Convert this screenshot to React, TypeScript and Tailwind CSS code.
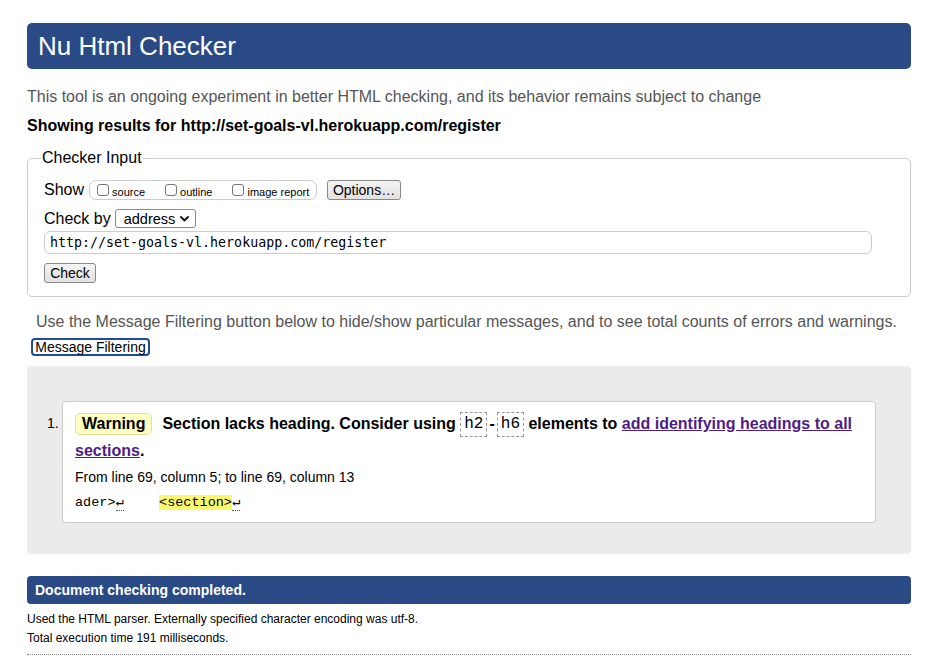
import React from 'react';

const sans = "font-['Liberation_Sans',Arial,sans-serif]";
const mono = "font-['Liberation_Mono','Courier_New',monospace]";

function Box({ label }: { label: string }) {
  return (
    <label className="flex shrink-0 items-center gap-[3px] whitespace-nowrap">
      <span className="inline-block h-[12px] w-[12px] rounded-[3px] border border-[#777] bg-white" />
      <span className="mt-[3px] text-[11px] leading-[14px]">{label}</span>
    </label>
  );
}

function Code({ children }: { children: React.ReactNode }) {
  return (
    <code
      className={`${mono} inline-block border border-dashed border-[#999] px-[3px] align-middle text-[16px] font-normal leading-[23px]`}
    >
      {children}
    </code>
  );
}

export default function App() {
  return (
    <div className={`${sans} min-h-[661px] bg-white text-black`}>
      <div className="ml-[27px] w-[884px] pt-[23px]">
        <h1 className="flex h-[46px] items-center rounded-[5px] bg-[#2a4a86] px-[11px] text-[26px] font-normal text-white">
          Nu Html Checker
        </h1>

        <p className="mt-[18px] text-[16px] leading-[20px] text-[#555]">
          This tool is an ongoing experiment in better HTML checking, and its behavior remains subject to change
        </p>
        <p className="mt-[9px] text-[16px] font-bold leading-[20px]">
          Showing results for http://set-goals-vl.herokuapp.com/register
        </p>

        <fieldset className="mt-[12px] rounded-[5px] border border-[#ccc] px-[16px] pb-[13px]">
          <legend className="-ml-[3px] px-[1px] text-[16px] leading-[20px]">Checker Input</legend>

          <div className="mt-[12px] flex h-[20px] items-center">
            <span className="text-[16px] leading-[20px]">Show</span>
            <div className="ml-[5px] flex h-[20px] w-[228px] items-center gap-[20px] rounded-[7px] border border-[#ccc] pl-[7px]">
              <Box label="source" />
              <Box label="outline" />
              <Box label="image report" />
            </div>
            <button className="ml-[10px] h-[20px] w-[74px] rounded-[3px] border border-[#888] bg-gradient-to-b from-[#f4f4f4] to-[#e2e2e2] text-[14px] leading-[18px]">
              Options…
            </button>
          </div>

          <div className="mt-[9px] flex h-[19px] items-center">
            <span className="text-[16px] leading-[20px]">Check by</span>
            <div className="ml-[4px] flex h-[19px] w-[81px] items-center justify-between rounded-[3px] border border-[#888] bg-white pl-[8px] pr-[6px]">
              <span className="text-[14.5px] leading-[16px]">address</span>
              <svg width="9" height="6" viewBox="0 0 9 6" fill="none">
                <path d="M1 1l3.5 3.5L8 1" stroke="#111" strokeWidth="1.8" strokeLinecap="round" strokeLinejoin="round" />
              </svg>
            </div>
          </div>

          <div className="mt-[3px] flex h-[23px] w-[828px] items-center rounded-[6px] border border-[#ccc] bg-white px-[5px]">
            <span className="font-['DejaVu_Sans_Mono',monospace] text-[13.3px] leading-[16px]">
              http://set-goals-vl.herokuapp.com/register
            </span>
          </div>

          <button className="mt-[9px] block h-[20px] w-[52px] rounded-[3px] border border-[#888] bg-gradient-to-b from-[#f4f4f4] to-[#e2e2e2] text-[14px] leading-[18px]">
            Check
          </button>
        </fieldset>

        <p className="ml-[9px] mt-[15px] text-[16px] leading-[20px] text-[#555]">
          Use the Message Filtering button below to hide/show particular messages, and to see total counts of errors and warnings.
        </p>
        <button className="ml-[4px] mt-[6px] block h-[18px] w-[119px] rounded-[4px] border-2 border-[#1f4a9c] bg-white text-[14px] leading-[14px]">
          Message Filtering
        </button>

        <div className="mt-[10px] rounded-[4px] bg-[#ebebeb] pb-[31px] pl-[20px] pr-[35px] pt-[35px]">
          <ol className="flex">
            <li className="flex w-full">
              <span className="w-[15px] pt-[12px] text-[14px] leading-[20px]">1.</span>
              <div className="flex-1 rounded-[4px] border border-[#ccc] bg-white pb-[9px] pl-[12px] pr-[12px] pt-[8px]">
                <p className="text-[16px] font-bold leading-[27px]">
                  <span className="inline-block rounded-[5px] border border-[#e3df9f] bg-[#ffffc2] px-[6px] leading-[20px]">
                    Warning
                  </span>
                  <span className="ml-[10px]">Section lacks heading. Consider using </span>
                  <Code>h2</Code>
                  <span className="mx-[2px]">-</span>
                  <Code>h6</Code>
                  <span> elements to </span>
                  <a className="text-[#4f1d86] underline">add identifying headings to all sections</a>
                  <span>.</span>
                </p>
                <p className="mt-[3px] text-[14px] leading-[20px]">From line 69, column 5; to line 69, column 13</p>
                <p className={`${mono} mt-[6px] whitespace-pre text-[13.5px] leading-[20px]`}>
                  <span>ader&gt;</span>
                  <span className="border-b border-dotted border-[#555]">↵</span>
                  <span>{'    '}</span>
                  <span className="ml-[3px] bg-[#fbf86c]">&lt;section&gt;</span>
                  <span className="border-b border-dotted border-[#555]">↵</span>
                </p>
              </div>
            </li>
          </ol>
        </div>

        <div className="mt-[22px] flex h-[28px] items-center rounded-[4px] bg-[#2a4a86] px-[8px] text-[14px] font-bold text-white">
          Document checking completed.
        </div>
        <p className="mt-[7px] text-[12px] leading-[16px]">
          Used the HTML parser. Externally specified character encoding was utf-8.
        </p>
        <p className="mt-[3px] text-[12px] leading-[16px]">Total execution time 191 milliseconds.</p>
        <div className="mt-[8px] border-t border-dotted border-[#888]" />
      </div>
    </div>
  );
}
